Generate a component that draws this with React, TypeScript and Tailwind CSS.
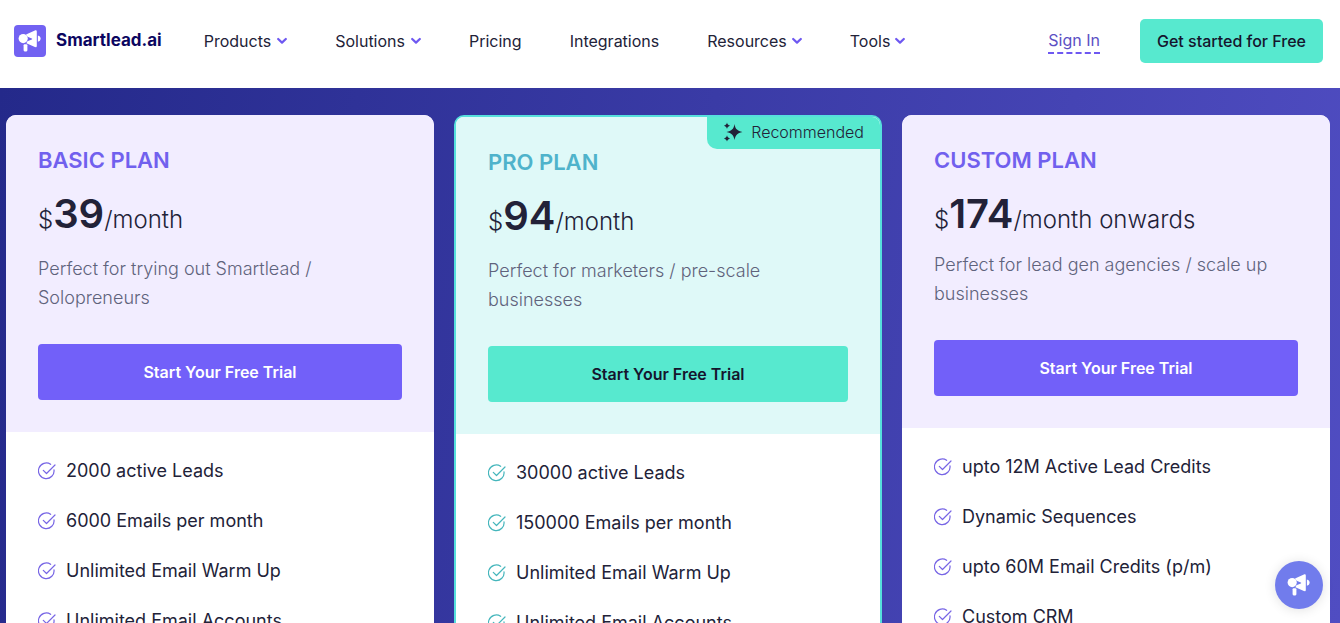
type Plan = {
  name: string;
  price: string;
  period: string;
  description: string;
  features: string[];
  recommended?: boolean;
  compact?: boolean;
};

const plans: Plan[] = [
  {
    name: "BASIC PLAN",
    price: "39",
    period: "/month",
    description: "Perfect for trying out Smartlead / Solopreneurs",
    features: ["2000 active Leads", "6000 Emails per month", "Unlimited Email Warm Up", "Unlimited Email Accounts"],
  },
  {
    name: "PRO PLAN",
    price: "94",
    period: "/month",
    description: "Perfect for marketers / pre-scale businesses",
    features: ["30000 active Leads", "150000 Emails per month", "Unlimited Email Warm Up", "Unlimited Email Accounts"],
    recommended: true,
  },
  {
    name: "CUSTOM PLAN",
    price: "174",
    period: "/month onwards",
    description: "Perfect for lead gen agencies / scale up businesses",
    features: ["upto 12M Active Lead Credits", "Dynamic Sequences", "upto 60M Email Credits (p/m)", "Custom CRM"],
    compact: true,
  },
];

const navItems = [
  { label: "Products", menu: true, gap: "gap-[6px]" },
  { label: "Solutions", menu: true, gap: "gap-[6px]" },
  { label: "Pricing", menu: false, gap: "" },
  { label: "Integrations", menu: false, gap: "" },
  { label: "Resources", menu: true, gap: "gap-[5px]" },
  { label: "Tools", menu: true, gap: "gap-[5px]" },
];

function Megaphone({ className }: { className: string }) {
  return (
    <svg viewBox="0 0 24 24" className={className} fill="currentColor" aria-hidden="true">
      <circle cx="5.200" cy="9.600" r="4.600" />
      <path d="M8 5.400 16.900 1.400c1-.5 1.900 0 1.900 1.100v14.400c0 1.100-.9 1.500-1.900 1.100L8.400 14.300 9.400 12.200l4.400-1.700c.6-.2.600-.7 0-1L9.600 7.700z" />
      <path d="M19.900 6.400c1.600.3 2.700 1.500 2.700 3.200s-1.100 2.900-2.700 3.200z" />
      <rect x="5.600" y="15.200" width="3.800" height="7.200" rx="1.100" />
    </svg>
  );
}

function Chevron() {
  return (
    <svg viewBox="0 0 10 8" className="h-2 w-[10px]" fill="none" stroke="#6e58f1" strokeWidth="2.200" aria-hidden="true">
      <path d="M1.200 2 5 5.600 8.800 2" strokeLinecap="round" strokeLinejoin="round" />
    </svg>
  );
}

function Sparkles() {
  return (
    <svg viewBox="0 0 20 20" className="size-5" fill="currentColor" aria-hidden="true">
      <path d="M11.500 2c.5 2.800 1.200 4.500 2.500 5.600 1.100 1.100 2.800 1.900 5.500 2.400-2.700.5-4.400 1.300-5.500 2.400-1.300 1.100-2 2.800-2.500 5.600-.5-2.800-1.200-4.500-2.500-5.600C7.900 11.300 6.200 10.500 3.500 10c2.700-.5 4.400-1.300 5.500-2.400C10.300 6.500 11 4.800 11.500 2z" />
      <path d="M4 .6c.4 1.700 1.200 2.700 3.200 3.200C5.200 4.300 4.400 5.300 4 7 3.600 5.300 2.800 4.300.8 3.800 2.800 3.300 3.600 2.300 4 .6zM4 13.200c.4 1.700 1.200 2.700 3.200 3.200-2 .5-2.800 1.500-3.200 3.200-.4-1.700-1.200-2.700-3.200-3.200 2-.5 2.800-1.500 3.200-3.200z" />
    </svg>
  );
}

function CheckCircle({ className }: { className: string }) {
  return (
    <svg viewBox="0 0 18 18" className={className} fill="none" stroke="currentColor" strokeWidth="1.200" strokeLinecap="round" strokeLinejoin="round" aria-hidden="true">
      <path d="M16 7.800A7.800 7.800 0 1 1 12.600 2.300" />
      <path d="M5.300 8.300 8.500 11.500 17 3" />
    </svg>
  );
}

function PlanCard({ plan }: { plan: Plan }) {
  const pro = plan.recommended;
  return (
    <article className={`relative overflow-hidden rounded-[10px] bg-white ${pro ? "border-2 border-[#56dfdc]" : ""}`}>
      {pro && (
        <div className="absolute -top-[2px] -right-[2px] flex h-[34px] items-center gap-2 rounded-bl-[10px] bg-[#57e9cf] pr-[18px] pl-4 text-base font-light text-[#222238]">
          <Sparkles />
          Recommended
        </div>
      )}
      <div className={`px-8 pt-8 pb-8 ${pro ? "bg-[#dff9f8]" : "bg-[#f2edff]"}`}>
        <h2 className={`text-[22px] leading-[26px] font-semibold ${pro ? "text-[#4fb3cb]" : "text-[#7160ee]"}`}>{plan.name}</h2>
        <p className="mt-[17px] h-[49px] text-2xl/[48px] font-light text-[#222238]">
          $<span className="text-[40px] font-semibold">{plan.price}</span>
          {plan.period}
        </p>
        <p className={`text-lg/[29px] font-light text-[#5f637c] ${plan.compact ? "mt-[11px]" : "mt-[15px]"}`}>{plan.description}</p>
        <button
          type="button"
          className={`mt-8 h-14 w-full rounded text-base font-semibold ${pro ? "bg-[#57e9cf] text-[#15152d]" : "bg-[#7260f9] text-white"}`}
        >
          Start Your Free Trial
        </button>
      </div>
      <ul className="flex flex-col gap-5 px-8 pt-6 pb-8">
        {plan.features.map((feature) => (
          <li key={feature} className="flex items-center gap-[10px] text-lg/[30px] text-[#222238]">
            <CheckCircle className={`size-[18px] shrink-0 ${pro ? "text-[#45b6bc]" : "text-[#7765e5]"}`} />
            {feature}
          </li>
        ))}
      </ul>
    </article>
  );
}

export default function App() {
  return (
    <div className="flex h-screen flex-col overflow-hidden bg-white font-['Inter',sans-serif]">
      <header className="flex h-[88px] shrink-0 items-center bg-white pr-[17px] pb-[6px] pl-[14px] whitespace-nowrap">
        <a href="#home" className="flex items-center gap-[10px]">
          <span className="flex size-8 items-center justify-center rounded bg-[#7262f2] text-white">
            <Megaphone className="size-6" />
          </span>
          <span className="text-[17px] font-bold text-[#0b0660]">Smartlead.ai</span>
        </a>
        <nav className="ml-[42px] flex items-center gap-12 text-base text-[#222238]">
          {navItems.map((item) => (
            <a key={item.label} href={`#${item.label.toLowerCase()}`} className={`flex items-center ${item.gap}`}>
              {item.label}
              {item.menu && <Chevron />}
            </a>
          ))}
        </nav>
        <a href="#signin" className="ml-auto border-b-2 border-dashed border-[#6e58f1] text-base text-[#5b4fc4]">
          Sign In
        </a>
        <button type="button" className="ml-10 h-11 rounded-[5px] bg-[#57e9cf] px-[17px] text-base font-medium text-[#15152d]">
          Get started for Free
        </button>
      </header>
      <main className="min-h-0 flex-1 overflow-hidden bg-linear-[100deg] from-[#24298a] to-[#504dc2] pt-[27px] pr-[10px] pl-[6px]">
        <div className="grid grid-cols-3 gap-5">
          {plans.map((plan) => (
            <PlanCard key={plan.name} plan={plan} />
          ))}
        </div>
      </main>
      <button
        type="button"
        aria-label="Open chat"
        className="fixed right-[17px] bottom-[14px] flex size-12 items-center justify-center rounded-full bg-[#717cec] text-white shadow-[0_1px_12px_rgba(0,0,0,0.12)]"
      >
        <Megaphone className="size-6" />
      </button>
    </div>
  );
}
